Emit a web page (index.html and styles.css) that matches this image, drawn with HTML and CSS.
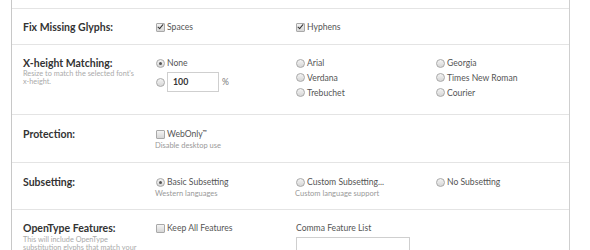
FILE: index.html
```html
<!DOCTYPE html>
<html>
<head>
<meta charset="utf-8">
<link rel="stylesheet" href="styles.css">
</head>
<body>
<div class="panel">
  <div class="row row-top"></div>

  <div class="row row-glyphs">
    <div class="label"><div class="title">Fix Missing Glyphs:</div></div>
    <div class="col"><div class="opt"><span class="cb on"></span><span>Spaces</span></div></div>
    <div class="col"><div class="opt"><span class="cb on"></span><span>Hyphens</span></div></div>
    <div class="col"></div>
  </div>

  <div class="row row-xheight">
    <div class="label">
      <div class="title">X-height Matching:</div>
      <div class="desc">Resize to match the selected font's<br>x-height.</div>
    </div>
    <div class="col">
      <div class="opt"><span class="rb on"></span><span>None</span></div>
      <div class="opt opt-input"><span class="rb"></span><span class="num">100</span><span class="pct">%</span></div>
    </div>
    <div class="col">
      <div class="opt"><span class="rb"></span><span>Arial</span></div>
      <div class="opt opt-tight"><span class="rb"></span><span>Verdana</span></div>
      <div class="opt opt-tight"><span class="rb"></span><span>Trebuchet</span></div>
    </div>
    <div class="col">
      <div class="opt"><span class="rb"></span><span>Georgia</span></div>
      <div class="opt opt-tight"><span class="rb"></span><span>Times New Roman</span></div>
      <div class="opt opt-tight"><span class="rb"></span><span>Courier</span></div>
    </div>
  </div>

  <div class="row row-std">
    <div class="label"><div class="title">Protection:</div></div>
    <div class="col">
      <div class="opt"><span class="cb"></span><span>WebOnly<sup class="tm">™</sup></span></div>
      <div class="sub">Disable desktop use</div>
    </div>
    <div class="col"></div>
    <div class="col"></div>
  </div>

  <div class="row row-std row-sub">
    <div class="label"><div class="title">Subsetting:</div></div>
    <div class="col">
      <div class="opt"><span class="rb on"></span><span>Basic Subsetting</span></div>
      <div class="sub">Western languages</div>
    </div>
    <div class="col">
      <div class="opt"><span class="rb"></span><span>Custom Subsetting...</span></div>
      <div class="sub">Custom language support</div>
    </div>
    <div class="col">
      <div class="opt"><span class="rb"></span><span>No Subsetting</span></div>
    </div>
  </div>

  <div class="row row-last">
    <div class="label">
      <div class="title">OpenType Features:</div>
      <div class="desc desc-ot">This will include OpenType<br>substitution glyphs that match your<br>selected features.</div>
    </div>
    <div class="col">
      <div class="opt"><span class="cb"></span><span>Keep All Features</span></div>
    </div>
    <div class="col">
      <div class="opt plain"><span>Comma Feature List</span></div>
      <div class="textbox"></div>
    </div>
    <div class="col"></div>
  </div>
</div>
</body>
</html>
```

FILE: styles.css
```css
html, body {
  margin: 0;
  padding: 0;
  background: #ffffff;
}

body {
  font-family: Lato, "Open Sans", "Liberation Sans", sans-serif;
  color: #555;
}

.panel {
  margin-left: 11px;
  width: 557px;
  height: 260px;
  border-left: 1px solid #c8c8c8;
  border-right: 1px solid #cfcfcf;
  overflow: hidden;
}

.row {
  display: grid;
  grid-template-columns: 132px 140px 140px 1fr;
  padding: 11px 0 10px 11px;
  border-bottom: 1px solid #e4e4e4;
}

.row-top {
  height: 8px;
  padding: 0;
}

.row-xheight {
  padding-bottom: 14px;
}

.row-std {
  padding-top: 12px;
  padding-bottom: 11px;
}

.row-sub {
  padding-bottom: 10px;
}

.row-last {
  border-bottom: none;
}

.title {
  font-weight: 700;
  font-size: 10.5px;
  line-height: 14px;
  color: #333;
  white-space: nowrap;
}

.desc {
  font-size: 7.3px;
  line-height: 8px;
  color: #aaa;
  white-space: nowrap;
}

.desc-ot {
  margin-top: 1px;
}

.col {
  display: flex;
  flex-direction: column;
}

.opt {
  display: flex;
  align-items: center;
  height: 14px;
  font-size: 8.6px;
  color: #555;
  white-space: nowrap;
}

.opt-tight {
  height: 15px;
}

.opt.plain {
  padding-left: 1px;
}

.opt-input {
  height: 20px;
  margin-top: 2px;
}

.sub {
  font-size: 7.5px;
  line-height: 10px;
  color: #999;
  white-space: nowrap;
}

.tm {
  font-size: 5.5px;
  font-weight: 700;
  vertical-align: 3px;
}

.cb, .rb {
  flex: none;
  width: 9px;
  height: 9px;
  margin: 0 2px 0 1px;
  box-sizing: border-box;
  border: 1px solid #a9a9a9;
  background: linear-gradient(#f4f4f4, #d6d6d6);
  position: relative;
}

.cb {
  border-radius: 1px;
}

.rb {
  border-radius: 50%;
}

.cb.on::after {
  content: "";
  position: absolute;
  left: 2px;
  top: -1px;
  width: 2px;
  height: 5px;
  border: solid #333;
  border-width: 0 1.6px 1.6px 0;
  transform: rotate(40deg);
}

.rb.on::after {
  content: "";
  position: absolute;
  left: 2px;
  top: 2px;
  width: 3px;
  height: 3px;
  border-radius: 50%;
  background: #555;
}

.num {
  width: 52px;
  height: 20px;
  box-sizing: border-box;
  margin-left: 0;
  padding-left: 5px;
  border: 1px solid #cfcfcf;
  font-size: 8.8px;
  font-weight: 700;
  color: #333;
  line-height: 18px;
  background: #fff;
}

.pct {
  margin-left: 3px;
  color: #777;
}

.textbox {
  margin-top: 2px;
  margin-left: 1px;
  width: 114px;
  height: 22px;
  box-sizing: border-box;
  border: 1px solid #cfcfcf;
  background: #fff;
}
```
